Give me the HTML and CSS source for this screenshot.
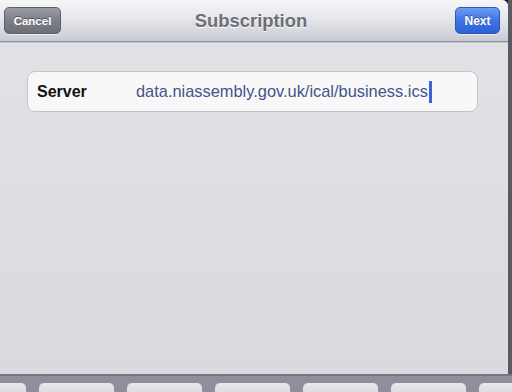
FILE: index.html
```html
<!DOCTYPE html>
<html>
<head>
<meta charset="utf-8">
<link rel="stylesheet" href="styles.css">
</head>
<body>
<div class="screen">
  <div class="sheet">
    <div class="navbar">
      <div class="nav-left"><span class="btn btn-cancel">Cancel</span></div>
      <div class="title">Subscription</div>
      <div class="nav-right"><span class="btn btn-next">Next</span></div>
    </div>
    <div class="content">
      <div class="field">
        <span class="label">Server</span>
        <span class="value">data.niassembly.gov.uk/ical/business.ics</span><span class="cursor"></span>
      </div>
    </div>
  </div>
  <div class="edge">
    <div class="edge-line"></div><div class="edge-line"></div><div class="edge-line"></div><div class="edge-line"></div><div class="edge-line"></div><div class="edge-line"></div><div class="edge-line"></div>
  </div>
</div>
<div class="keyboard">
  <div class="key k-first"></div>
  <div class="key"></div>
  <div class="key"></div>
  <div class="key"></div>
  <div class="key"></div>
  <div class="key"></div>
  <div class="key k-last"></div>
</div>
</body>
</html>
```
FILE: styles.css
```css
* { box-sizing: border-box; }
html, body { margin: 0; padding: 0; }
body {
  width: 512px;
  height: 392px;
  overflow: hidden;
  background: #1e1e20;
  font-family: "Liberation Sans", Arial, sans-serif;
  display: flex;
  flex-direction: column;
}
.screen {
  height: 374px;
  display: flex;
}
.sheet {
  width: 508px;
  height: 374px;
  background: linear-gradient(#e2e3e7, #d9dadf);
  border-top-right-radius: 6px;
  overflow: hidden;
  display: flex;
  flex-direction: column;
}
.navbar {
  height: 42px;
  background: linear-gradient(#f6f6f8 0%, #e6e7eb 45%, #c9cbd3 100%);
  border-bottom: 1px solid #8f919b;
  box-shadow: 0 1px 0 #c3c5cc;
  display: grid;
  grid-template-columns: 1fr auto 1fr;
  align-items: center;
  padding: 0 8px 0 4px;
}
.nav-right { display: flex; justify-content: flex-end; }
.title {
  font-weight: bold;
  font-size: 18.4px;
  color: #6c6f78;
  text-shadow: 0 1px 0 #ffffff;
  padding-right: 2px;
  padding-top: 1px;
}
.btn {
  display: inline-flex;
  align-items: center;
  justify-content: center;
  height: 27px;
  border-radius: 5px;
  color: #fff;
  font-weight: bold;
  font-size: 11.5px;
  text-shadow: 0 -1px 0 rgba(0,0,0,0.4);
}
.btn-cancel {
  width: 57px;
  background: linear-gradient(#999ca5 0%, #7d8089 50%, #6c6f78 100%);
  border: 1px solid #5d6068;
  box-shadow: 0 1px 0 rgba(255,255,255,0.6);
}
.btn-next {
  width: 45px;
  font-size: 12px;
  background: linear-gradient(#6d9cf0 0%, #3f75e4 50%, #2b60d8 100%);
  border: 1px solid #2f58b6;
  box-shadow: 0 1px 0 rgba(255,255,255,0.6);
}
.content {
  flex: 1;
  padding: 29px 30px 0 27px;
}
.field {
  height: 41px;
  background: #f8f8f9;
  border: 1px solid #c3c4c9;
  border-radius: 8px;
  display: flex;
  align-items: center;
  padding-left: 9px;
}
.label {
  width: 99px;
  font-weight: bold;
  font-size: 16px;
  color: #111;
}
.value {
  font-size: 16.4px;
  color: #42548a;
}
.cursor {
  width: 3px;
  height: 22px;
  background: #3a63d6;
  margin-left: 1px;
}
.edge {
  width: 4px;
  background: #5a5b60;
  display: flex;
  flex-direction: column;
  padding-top: 134px;
  gap: 44px;
}
.edge-line {
  height: 1px;
  background: #3e3f44;
}
.keyboard {
  height: 18px;
  background: #8e8f9a;
  border-top: 2px solid #75767e;
  display: flex;
  align-items: flex-end;
  gap: 13px;
  padding-top: 8px;
}
.key {
  width: 75px;
  height: 9px;
  background: linear-gradient(#e6e7ea, #dcdde1);
  border-radius: 5px 5px 0 0;
  flex-shrink: 0;
}
.k-first { width: 26px; border-top-left-radius: 0; }
.k-last { width: 40px; }
```
